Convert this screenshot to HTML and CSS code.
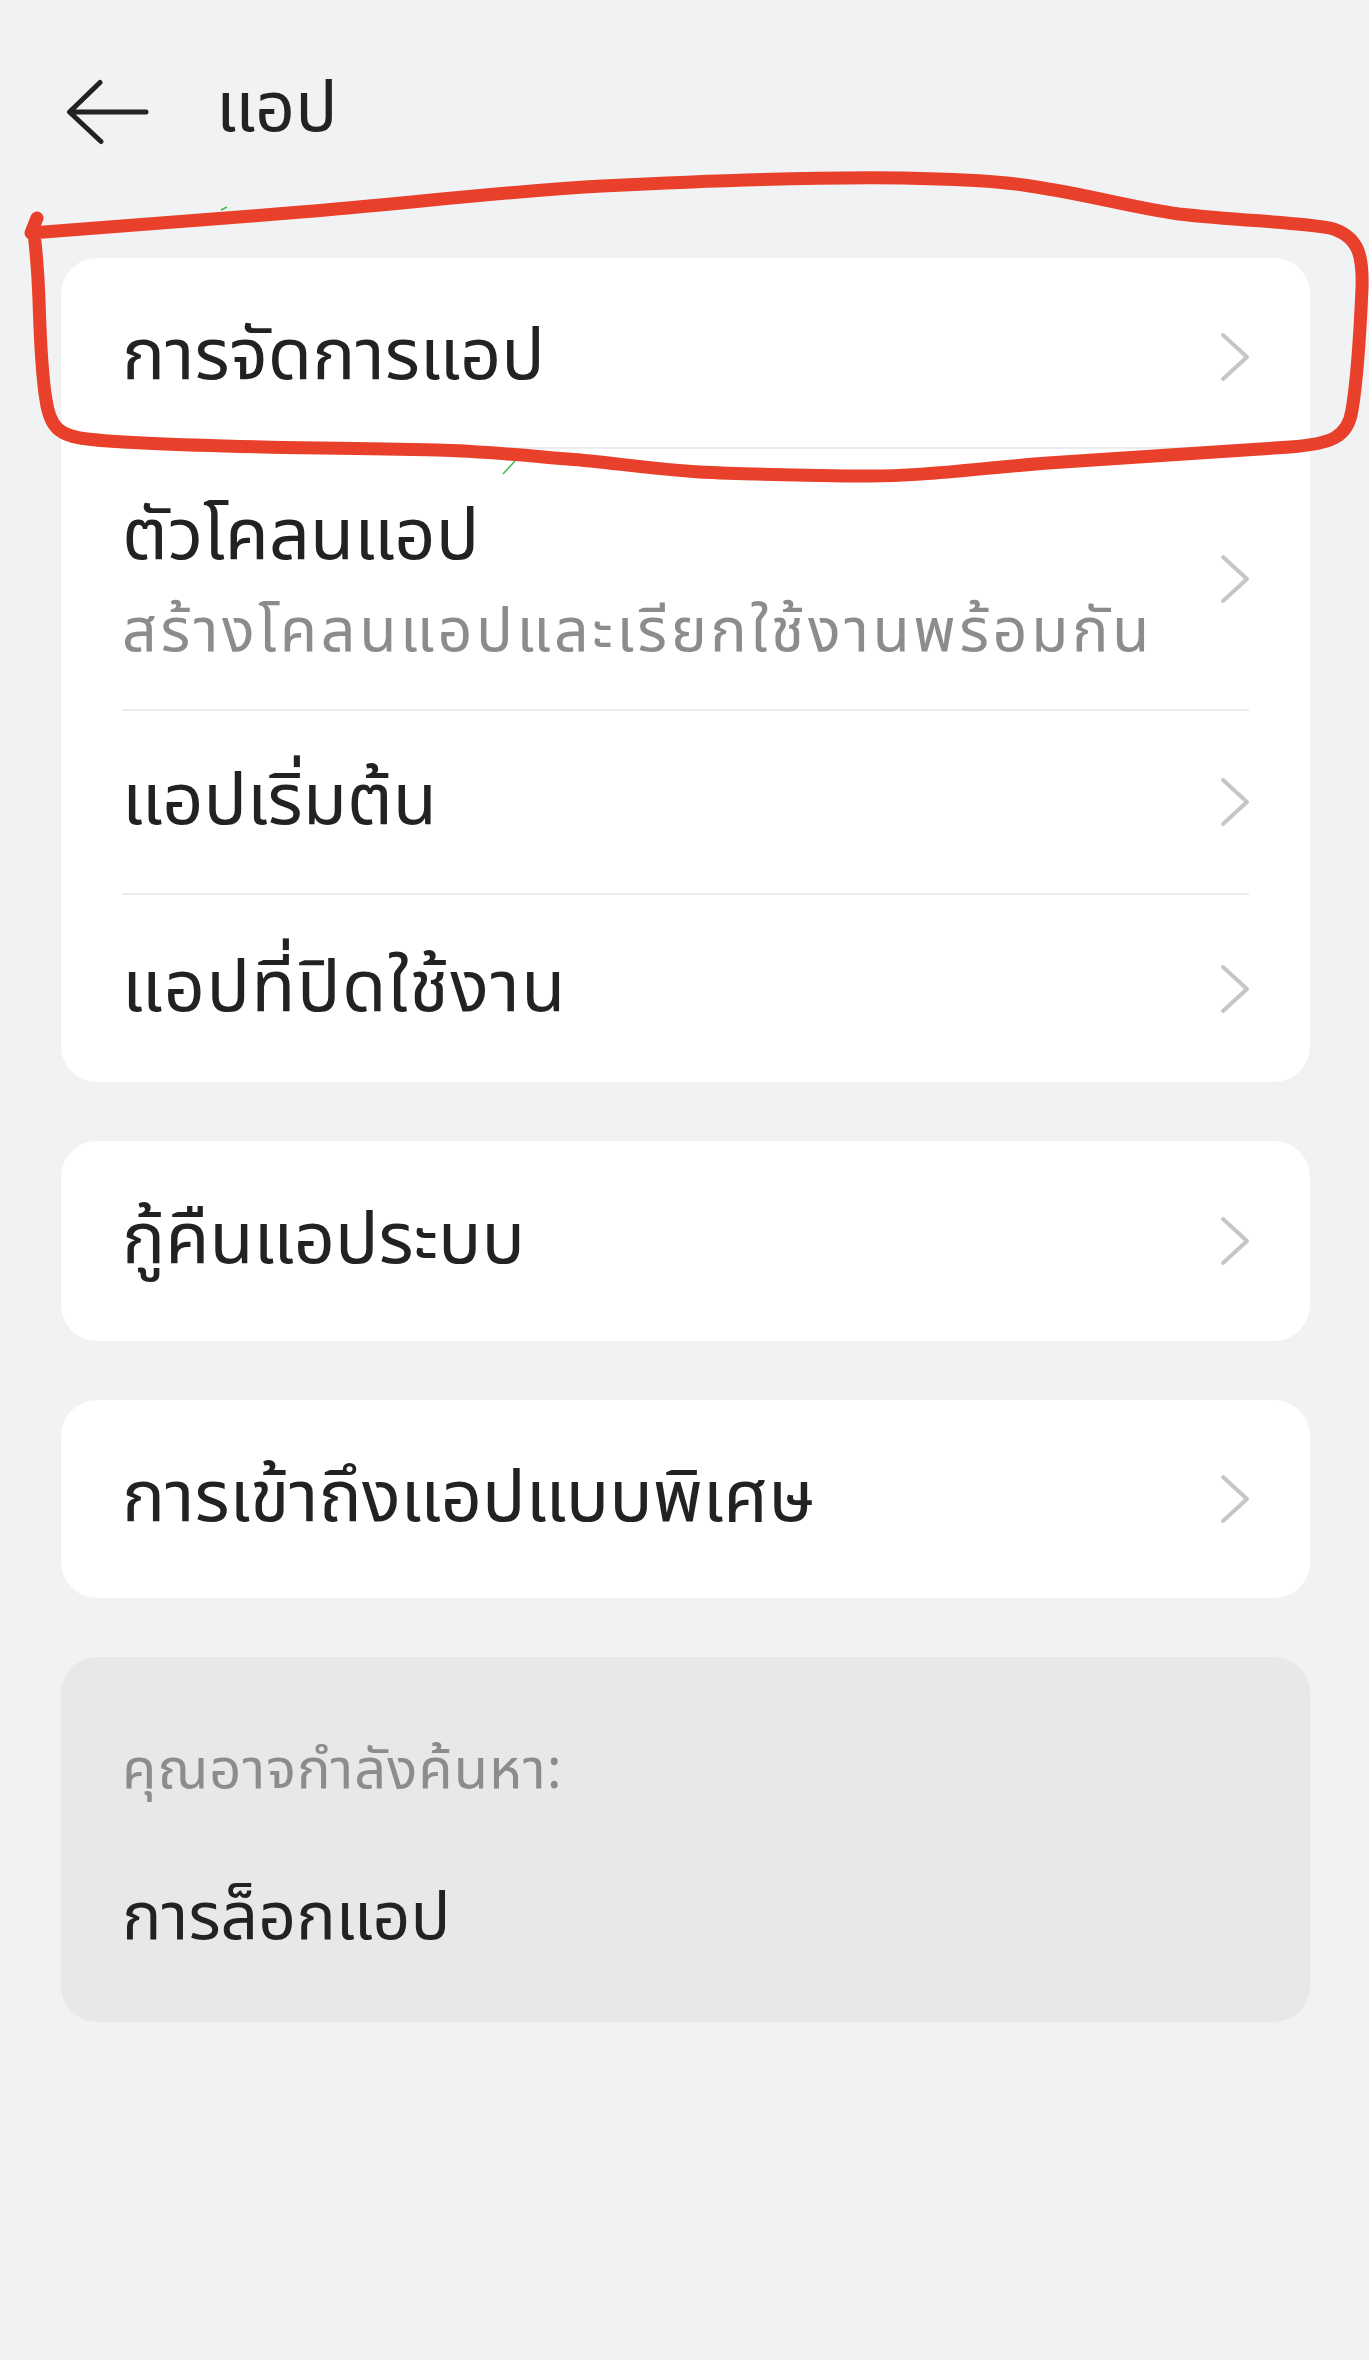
FILE: index.html
```html
<!DOCTYPE html>
<html lang="th">
<head>
<meta charset="utf-8">
<title>แอป</title>
<link rel="stylesheet" href="styles.css">
</head>
<body>
<div class="screen">
  <header class="topbar">
    <svg class="back" width="84" height="66" viewBox="0 0 84 66" aria-hidden="true">
      <path d="M80 33 H4 M34 3.5 L3.5 33 L35 62.5" fill="none" stroke="#222" stroke-width="5" stroke-linecap="round" stroke-linejoin="round"/>
    </svg>
    <h1 class="title">แอป</h1>
  </header>

  <main class="content">
    <section class="card">
      <div class="row row-h189 row-first">
        <div class="row-body">
          <span class="label">การจัดการแอป</span>
          <svg class="chev" width="34" height="52" viewBox="0 0 34 52"><path d="M5 4 L29 26 L5 48" fill="none" stroke="#c6c6c6" stroke-width="4" stroke-linecap="round" stroke-linejoin="round"/></svg>
        </div>
      </div>
      <div class="row row-h262">
        <div class="row-body">
          <div class="texts">
            <span class="label">ตัวโคลนแอป</span>
            <span class="sub">สร้างโคลนแอปและเรียกใช้งานพร้อมกัน</span>
          </div>
          <svg class="chev" width="34" height="52" viewBox="0 0 34 52"><path d="M5 4 L29 26 L5 48" fill="none" stroke="#c6c6c6" stroke-width="4" stroke-linecap="round" stroke-linejoin="round"/></svg>
        </div>
      </div>
      <div class="row row-h184">
        <div class="row-body">
          <span class="label">แอปเริ่มต้น</span>
          <svg class="chev" width="34" height="52" viewBox="0 0 34 52"><path d="M5 4 L29 26 L5 48" fill="none" stroke="#c6c6c6" stroke-width="4" stroke-linecap="round" stroke-linejoin="round"/></svg>
        </div>
      </div>
      <div class="row row-h189">
        <div class="row-body">
          <span class="label label-wide">แอปที่ปิดใช้งาน</span>
          <svg class="chev" width="34" height="52" viewBox="0 0 34 52"><path d="M5 4 L29 26 L5 48" fill="none" stroke="#c6c6c6" stroke-width="4" stroke-linecap="round" stroke-linejoin="round"/></svg>
        </div>
      </div>
    </section>

    <section class="card">
      <div class="row row-h200">
        <div class="row-body">
          <span class="label">กู้คืนแอประบบ</span>
          <svg class="chev" width="34" height="52" viewBox="0 0 34 52"><path d="M5 4 L29 26 L5 48" fill="none" stroke="#c6c6c6" stroke-width="4" stroke-linecap="round" stroke-linejoin="round"/></svg>
        </div>
      </div>
    </section>

    <section class="card">
      <div class="row row-h198">
        <div class="row-body">
          <span class="label">การเข้าถึงแอปแบบพิเศษ</span>
          <svg class="chev" width="34" height="52" viewBox="0 0 34 52"><path d="M5 4 L29 26 L5 48" fill="none" stroke="#c6c6c6" stroke-width="4" stroke-linecap="round" stroke-linejoin="round"/></svg>
        </div>
      </div>
    </section>

    <section class="card card-suggest">
      <p class="suggest-head">คุณอาจกำลังค้นหา:</p>
      <p class="suggest-item">การล็อกแอป</p>
    </section>
  </main>

  <svg class="annot" width="1369" height="500" viewBox="0 0 1369 500" aria-hidden="true">
    <path d="M37 218 L31 233 C 90 229, 200 220, 301 212 C 400 204, 520 190, 602 186 C 700 181, 820 177, 902 178 C 960 179, 1000 181, 1030 186 C 1090 195, 1130 207, 1179 214 C 1240 221, 1300 222, 1330 228 C 1360 236, 1363 258, 1362 288 C 1360 335, 1357 380, 1352 410 C 1348 438, 1330 444, 1290 447 C 1220 452, 1120 458, 1048 463 C 980 468, 920 477, 860 476 C 790 475, 740 474, 699 472 C 640 468, 610 462, 568 459 C 520 455, 480 451, 437 450 C 360 448, 300 448, 262 447 C 180 445, 120 443, 87 439 C 60 436, 50 428, 46 400 C 41 370, 40 330, 39 300 C 38 270, 36 250, 34 233" fill="none" stroke="#e8402b" stroke-width="13" stroke-linecap="round" stroke-linejoin="round"/>
    <path d="M221 210 L227 207" stroke="#3cbf4a" stroke-width="1.5" fill="none"/>
    <path d="M515 461 L503 474" stroke="#3cbf4a" stroke-width="1.5" fill="none"/>
  </svg>
</div>
</body>
</html>
```

FILE: styles.css
```css
* { box-sizing: border-box; }

html, body {
  margin: 0;
  padding: 0;
  background: #f1f2f4;
}

body {
  font-family: "Noto Sans Thai", "Noto Sans Thai UI", "Noto Sans", "DejaVu Sans", sans-serif;
  color: #222;
  width: 1369px;
  min-height: 2360px;
}

.screen {
  position: relative;
  min-height: 2360px;
}

.topbar {
  height: 224px;
  display: flex;
  align-items: center;
  padding-left: 66px;
  gap: 66px;
}

.back { display: block; flex: none; }

.title {
  margin: 0;
  font-size: 70px;
  font-weight: 400;
  line-height: 1;
  color: #222;
  position: relative;
  top: -2px;
}

.content {
  padding: 34px 59px 0 61px;
  display: flex;
  flex-direction: column;
  gap: 59px;
}

.card {
  background: #fff;
  border-radius: 36px;
}

.row { padding: 0 61px; }

.row-body {
  display: flex;
  align-items: center;
  justify-content: space-between;
  height: 100%;
  border-top: 2px solid #ededed;
}

.row:first-child .row-body { border-top: none; }
.row-first .row-body { padding-top: 8px; }

.row-h189 { height: 189px; }
.row-h262 { height: 262px; }
.row-h184 { height: 184px; }
.row-h200 { height: 200px; }
.row-h198 { height: 198px; }

.label {
  font-size: 72px;
  line-height: 96px;
  color: #222;
}

.label-wide { letter-spacing: 1.5px; }

.texts {
  display: flex;
  flex-direction: column;
  margin-top: 9px;
}

.texts .label { line-height: 88px; }

.sub {
  font-size: 61px;
  line-height: 84px;
  letter-spacing: 3.5px;
  margin-top: 9px;
  color: #8c8c8c;
}

.chev { display: block; flex: none; margin-right: -3px; }

.card-suggest {
  background: #e7e8ea;
  height: 365px;
  padding: 76px 61px 0;
}

.suggest-head {
  margin: 0;
  font-size: 56px;
  line-height: 76px;
  letter-spacing: 1px;
  color: #8c8c8c;
}

.suggest-item {
  margin: 65px 0 0;
  font-size: 66px;
  line-height: 90px;
  color: #222;
}

.annot {
  position: absolute;
  left: 0;
  top: 0;
  pointer-events: none;
}
```
